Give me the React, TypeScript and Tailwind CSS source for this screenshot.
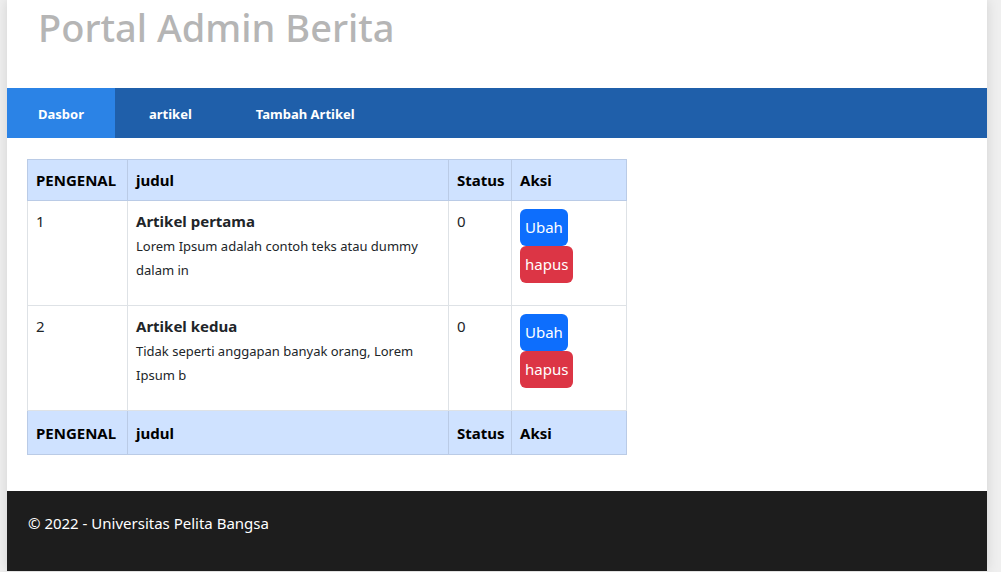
import React from "react"

const articles = [
  {
    id: 1,
    title: "Artikel pertama",
    desc: "Lorem Ipsum adalah contoh teks atau dummy dalam in",
    status: 0,
  },
  {
    id: 2,
    title: "Artikel kedua",
    desc: "Tidak seperti anggapan banyak orang, Lorem Ipsum b",
    status: 0,
  },
]

function HeadCells({ py }: { py: string }) {
  const cls = `border border-[#bacbe6] px-2 text-left font-bold ${py}`
  return (
    <>
      <th className={cls}>PENGENAL</th>
      <th className={cls}>judul</th>
      <th className={cls}>Status</th>
      <th className={cls}>Aksi</th>
    </>
  )
}

export default function App() {
  return (
    <div className="min-h-screen bg-[#efefef] font-['Noto_Sans',sans-serif] text-[#212529]">
      <div className="ml-[7px] w-[980px] bg-white shadow-[0_0_12px_rgba(0,0,0,0.12)]">
        <header className="h-[88px] px-[31px] pt-[3px]">
          <h1 className="text-[38px] leading-[48px] font-medium text-[#b5b5b5]">Portal Admin Berita</h1>
        </header>

        <nav className="flex h-[50px] gap-[4px] bg-[#1f5faa] pt-[3px] text-[13px] font-bold text-white">
          <a className="-mt-[3px] flex items-center bg-[#2b83e6] px-[31px] pt-[3px]">Dasbor</a>
          <a className="flex items-center px-[30px]">artikel</a>
          <a className="flex items-center px-[30px]">Tambah Artikel</a>
        </nav>

        <main className="px-5 pt-[21px] pb-9">
          <table className="w-[599px] table-fixed border-collapse text-[15px] leading-6">
            <colgroup>
              <col className="w-[100px]" />
              <col className="w-[321px]" />
              <col className="w-[63px]" />
              <col className="w-[115px]" />
            </colgroup>
            <thead>
              <tr className="bg-[#cfe2ff] text-black">
                <HeadCells py="py-2" />
              </tr>
            </thead>
            <tbody>
              {articles.map((a) => (
                <tr key={a.id} className="align-top">
                  <td className="border border-[#dee2e6] px-2 py-2">{a.id}</td>
                  <td className="border border-[#dee2e6] px-2 py-2">
                    <b className="block">{a.title}</b>
                    <p className="mb-[15px] pt-[1px] text-[13px] leading-6">{a.desc}</p>
                  </td>
                  <td className="border border-[#dee2e6] px-2 py-2">{a.status}</td>
                  <td className="border border-[#dee2e6] px-2 py-2">
                    <div className="flex flex-col items-start">
                      <button className="rounded-md bg-[#0d6efd] px-[5px] py-[6px] text-[15px] leading-[25px] text-white">Ubah</button>
                      <button className="rounded-md bg-[#dc3545] px-[5px] py-[6px] text-[15px] leading-[25px] text-white">hapus</button>
                    </div>
                  </td>
                </tr>
              ))}
            </tbody>
            <tfoot>
              <tr className="bg-[#cfe2ff] text-black">
                <HeadCells py="pt-[10px] pb-[9px]" />
              </tr>
            </tfoot>
          </table>
        </main>

        <footer className="h-[80px] bg-[#1d1d1d] px-[21px] pt-5 text-[15px] leading-6 text-white">
          &copy; 2022 - Universitas Pelita Bangsa
        </footer>
      </div>
    </div>
  )
}
